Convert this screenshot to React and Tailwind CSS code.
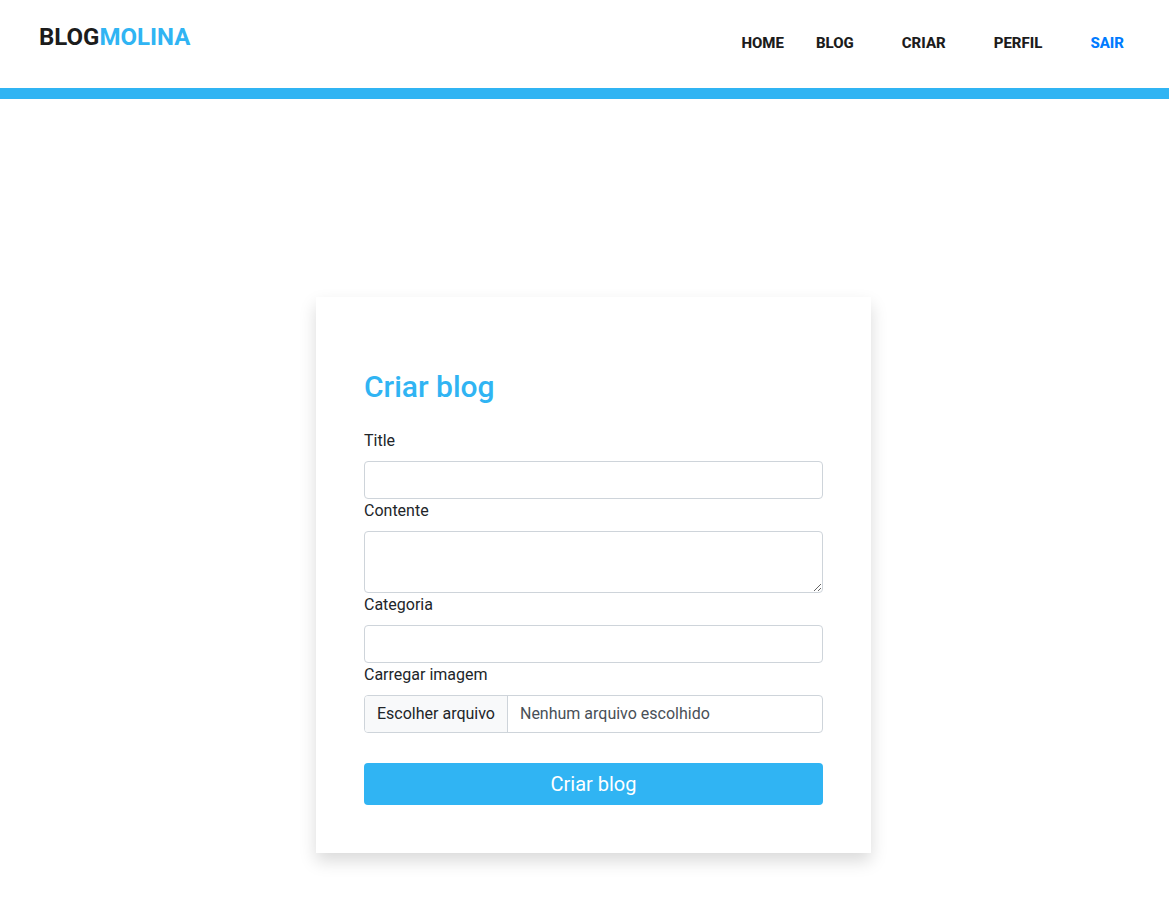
import { useState } from "react";

const links = [
  { label: "HOME", className: "mr-8 text-[#1c1c1c]" },
  { label: "BLOG", className: "mr-12 text-[#1c1c1c]" },
  { label: "CRIAR", className: "mr-12 text-[#1c1c1c]" },
  { label: "PERFIL", className: "mr-12 text-[#1c1c1c]" },
  { label: "SAIR", className: "text-[#007bff]" },
];

const control =
  "block w-full rounded border border-[#ced4da] bg-white px-3 py-1.5 text-base text-[#495057] outline-none focus:border-[#80bdff]";

function Header() {
  return (
    <header className="border-b-11 border-[#30b4f3]">
      <div className="flex h-[88px] items-start justify-between pr-[45px] pl-[39px]">
        <a href="#inicio" className="pt-[19px] text-[24px] leading-[36px] font-bold text-[#1c1c1c]">
          BLOG<span className="text-[#30b4f3]">MOLINA</span>
        </a>
        <nav className="flex pt-[31px] text-[15px] leading-[24px] font-extrabold">
          {links.map((link) => (
            <a key={link.label} href={`#${link.label.toLowerCase()}`} className={link.className}>
              {link.label}
            </a>
          ))}
        </nav>
      </div>
    </header>
  );
}

function FilePicker() {
  const [name, setName] = useState("");
  return (
    <label className="flex cursor-pointer overflow-hidden rounded border border-[#ced4da] bg-white focus-within:border-[#80bdff]">
      <span className="border-r border-[#ced4da] bg-[#f8f9fa] px-3 py-1.5 text-[#212529]">
        Escolher arquivo
      </span>
      <span className="px-3 py-1.5 text-[#495057]">{name || "Nenhum arquivo escolhido"}</span>
      <input
        id="imagem"
        type="file"
        className="sr-only"
        onChange={(e) => setName(e.target.files[0] ? e.target.files[0].name : "")}
      />
    </label>
  );
}

export default function App() {
  return (
    <div className="min-h-screen bg-white font-['Roboto',sans-serif] text-base text-[#212529]">
      <Header />
      <main className="flex justify-center pt-[198px] pb-12 pl-[18px]">
        <form
          className="w-full max-w-[555px] bg-white px-12 pt-[72px] pb-12 shadow-[0_8px_16px_rgba(0,0,0,0.15)]"
          onSubmit={(e) => e.preventDefault()}
        >
          <h1 className="mb-[24px] text-[30px] leading-[36px] font-medium text-[#30b4f3]">
            Criar blog
          </h1>
          <label htmlFor="titulo" className="mb-2 block">
            Title
          </label>
          <input id="titulo" type="text" className={control} />
          <label htmlFor="conteudo" className="mb-2 block">
            Contente
          </label>
          <textarea id="conteudo" rows={2} className={`${control} resize-y`} />
          <label htmlFor="categoria" className="mb-2 block">
            Categoria
          </label>
          <input id="categoria" type="text" className={control} />
          <label htmlFor="imagem" className="mb-2 block">
            Carregar imagem
          </label>
          <FilePicker />
          <button
            type="submit"
            className="mt-[30px] block w-full cursor-pointer rounded bg-[#30b4f3] py-1.5 text-[20px] leading-[30px] text-white"
          >
            Criar blog
          </button>
        </form>
      </main>
    </div>
  );
}
